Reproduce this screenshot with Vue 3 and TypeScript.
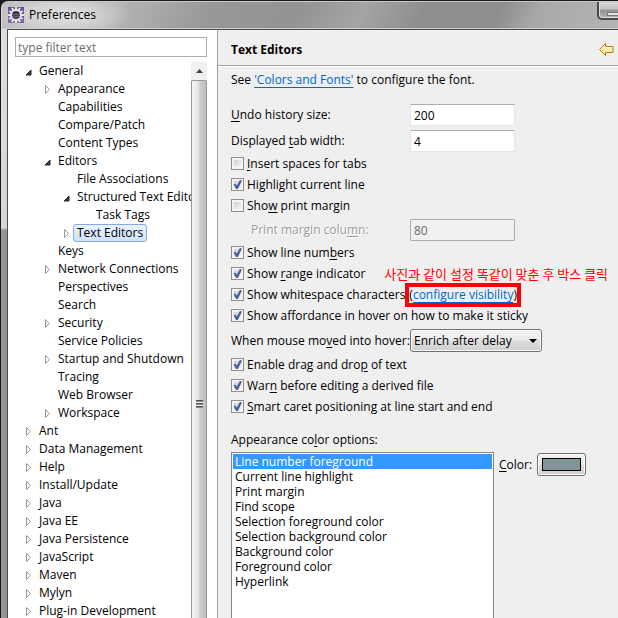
<script setup lang="ts">
import { reactive, ref } from 'vue'

interface TreeItem {
  label: string
  depth: number
  state?: 'open' | 'closed'
}

interface Label {
  pre: string
  key: string
  post: string
}

interface CheckOption extends Label {
  id: string
  checked: boolean
}

const tree: TreeItem[] = [
  { label: 'General', depth: 0, state: 'open' },
  { label: 'Appearance', depth: 1, state: 'closed' },
  { label: 'Capabilities', depth: 1 },
  { label: 'Compare/Patch', depth: 1 },
  { label: 'Content Types', depth: 1 },
  { label: 'Editors', depth: 1, state: 'open' },
  { label: 'File Associations', depth: 2 },
  { label: 'Structured Text Editors', depth: 2, state: 'open' },
  { label: 'Task Tags', depth: 3 },
  { label: 'Text Editors', depth: 2, state: 'closed' },
  { label: 'Keys', depth: 1 },
  { label: 'Network Connections', depth: 1, state: 'closed' },
  { label: 'Perspectives', depth: 1 },
  { label: 'Search', depth: 1 },
  { label: 'Security', depth: 1, state: 'closed' },
  { label: 'Service Policies', depth: 1 },
  { label: 'Startup and Shutdown', depth: 1, state: 'closed' },
  { label: 'Tracing', depth: 1 },
  { label: 'Web Browser', depth: 1 },
  { label: 'Workspace', depth: 1, state: 'closed' },
  { label: 'Ant', depth: 0, state: 'closed' },
  { label: 'Data Management', depth: 0, state: 'closed' },
  { label: 'Help', depth: 0, state: 'closed' },
  { label: 'Install/Update', depth: 0, state: 'closed' },
  { label: 'Java', depth: 0, state: 'closed' },
  { label: 'Java EE', depth: 0, state: 'closed' },
  { label: 'Java Persistence', depth: 0, state: 'closed' },
  { label: 'JavaScript', depth: 0, state: 'closed' },
  { label: 'Maven', depth: 0, state: 'closed' },
  { label: 'Mylyn', depth: 0, state: 'closed' },
  { label: 'Plug-in Development', depth: 0, state: 'closed' },
]

const selectedPage = ref('Text Editors')
const filter = ref('')
const undoSize = ref('200')
const tabWidth = ref('4')
const marginColumn = ref('80')

const marginOptions = reactive<CheckOption[]>([
  { id: 'spaces', pre: '', key: 'I', post: 'nsert spaces for tabs', checked: false },
  { id: 'current', pre: 'Hi', key: 'g', post: 'hlight current line', checked: true },
  { id: 'margin', pre: 'Sho', key: 'w', post: ' print margin', checked: false },
])

const viewOptions = reactive<CheckOption[]>([
  { id: 'lines', pre: 'Show line num', key: 'b', post: 'ers', checked: true },
  { id: 'range', pre: 'Show ', key: 'r', post: 'ange indicator', checked: true },
  { id: 'whitespace', pre: 'Show whitespace characters', key: '', post: '', checked: true },
  { id: 'sticky', pre: 'Show affordance in hover on how to make it sticky', key: '', post: '', checked: true },
])

const editOptions = reactive<CheckOption[]>([
  { id: 'drag', pre: 'Enable drag and dro', key: 'p', post: ' of text', checked: true },
  { id: 'derived', pre: 'War', key: 'n', post: ' before editing a derived file', checked: true },
  { id: 'caret', pre: '', key: 'S', post: 'mart caret positioning at line start and end', checked: true },
])

const colorOptions = [
  'Line number foreground',
  'Current line highlight',
  'Print margin',
  'Find scope',
  'Selection foreground color',
  'Selection background color',
  'Background color',
  'Foreground color',
  'Hyperlink',
]
const selectedColor = ref(colorOptions[0])

const teeth = Array.from({ length: 12 }, (_, i) => i * 30)
</script>

<template>
  <div class="window">
    <header class="titlebar">
      <svg class="app-icon" viewBox="0 0 16 16" aria-hidden="true">
        <rect width="16" height="16" fill="#65509a" />
        <path d="M0 16V9l16 4v3z" fill="#7c63ad" />
        <g fill="#e9e6ea">
          <rect v-for="a in teeth" :key="a" x="7" y="0" width="2" height="3" :transform="`rotate(${a} 8 8)`" />
        </g>
        <circle cx="8" cy="8" r="5" fill="#413b50" stroke="#e9e6ea" stroke-width="2" />
        <path d="M4 7.5h8M4 9.5h8" stroke="#6c6580" stroke-width="1" />
      </svg>
      <h1 class="title">Preferences</h1>
      <button class="minimize" type="button" aria-label="Minimize"><span class="dash"></span></button>
    </header>

    <div class="body">
      <nav class="sidebar">
        <input v-model="filter" class="filter" type="text" placeholder="type filter text" aria-label="type filter text" />
        <div class="tree-area">
          <ul class="tree" role="tree">
            <li
              v-for="item in tree"
              :key="item.label"
              class="node"
              :class="`depth-${item.depth}`"
              role="treeitem"
              :aria-selected="item.label === selectedPage"
              @click="selectedPage = item.label"
            >
              <svg class="twisty" viewBox="0 0 8 10" aria-hidden="true">
                <path v-if="item.state === 'open'" d="M6 4v5h-5z" fill="#404040" stroke="#262626" />
                <path v-else-if="item.state === 'closed'" d="M1.5 1.5v8l4-4z" fill="#fff" stroke="#989898" />
              </svg>
              <span class="node-label" :class="{ selected: item.label === selectedPage }">{{ item.label }}</span>
            </li>
          </ul>
          <div class="scrollbar" aria-hidden="true">
            <div class="scroll-up">
              <svg viewBox="0 0 7 4" class="up-arrow"><path d="M0 4L3.500 0L7 4z" fill="#404040" /></svg>
            </div>
            <div class="thumb"><span class="grip"></span></div>
          </div>
        </div>
      </nav>

      <main class="page">
        <div class="page-head">
          <h2>Text Editors</h2>
          <button class="back" type="button" aria-label="Back">
            <svg viewBox="0 0 15 13" aria-hidden="true">
              <path d="M.5 6.500L6.500.5v3h7.500v6H6.500v3z" fill="#fdeeae" stroke="#b87a0a" />
              <path d="M2.500 6.500L5.500 3.500v1h7.500" fill="none" stroke="#fffbe6" />
            </svg>
          </button>
        </div>

        <div class="content">
          <p class="intro">See <a href="#fonts">'Colors and Fonts'</a> to configure the font.</p>

          <div class="field">
            <label for="undo"><u>U</u>ndo history size:</label>
            <input id="undo" v-model="undoSize" type="text" />
          </div>
          <div class="field">
            <label for="tab">Displayed <u>t</u>ab width:</label>
            <input id="tab" v-model="tabWidth" type="text" />
          </div>

          <div v-for="o in marginOptions" :key="o.id" class="check">
            <input :id="o.id" v-model="o.checked" type="checkbox" />
            <label :for="o.id">{{ o.pre }}<u>{{ o.key }}</u>{{ o.post }}</label>
          </div>

          <div class="field disabled">
            <label for="column">Print margin colu<u>m</u>n:</label>
            <input id="column" v-model="marginColumn" type="text" disabled />
          </div>

          <div v-for="o in viewOptions" :key="o.id" class="check">
            <input :id="o.id" v-model="o.checked" type="checkbox" />
            <label :for="o.id">{{ o.pre }}<u>{{ o.key }}</u>{{ o.post }}</label>
            <span v-if="o.id === 'whitespace'" class="configure">
              (<a href="#visibility">configure visibility</a>)
              <span class="note">사진과 같이 설정 똑같이 맞춘 후 박스 클릭</span>
            </span>
          </div>

          <div class="hover-row">
            <label for="hover">When mouse mo<u>v</u>ed into hover:</label>
            <span class="combo">
              <select id="hover">
                <option>Enrich after delay</option>
              </select>
              <svg class="combo-arrow" viewBox="0 0 8 4" aria-hidden="true"><path d="M0 0h8L4 4z" fill="#000" /></svg>
            </span>
          </div>

          <div v-for="o in editOptions" :key="o.id" class="check">
            <input :id="o.id" v-model="o.checked" type="checkbox" />
            <label :for="o.id">{{ o.pre }}<u>{{ o.key }}</u>{{ o.post }}</label>
          </div>

          <p id="colors-label" class="colors-label">Appearance co<u>l</u>or options:</p>
          <div class="colors">
            <ul class="color-list" role="listbox" aria-labelledby="colors-label">
              <li
                v-for="c in colorOptions"
                :key="c"
                role="option"
                :aria-selected="c === selectedColor"
                :class="{ active: c === selectedColor }"
                @click="selectedColor = c"
              >
                {{ c }}
              </li>
            </ul>
            <div class="color-pick">
              <label for="color"><u>C</u>olor:</label>
              <button id="color" class="swatch-button" type="button"><span class="swatch"></span></button>
            </div>
          </div>
        </div>
      </main>
    </div>
  </div>
</template>

<style>
body {
  background: #1c171d;
}
</style>

<style scoped>
.window {
  box-sizing: border-box;
  height: 100vh;
  margin-left: 1px;
  padding-top: 1px;
  display: flex;
  flex-direction: column;
  overflow: hidden;
  font-family: "Open Sans", "Noto Sans CJK KR", sans-serif;
  font-size: 12px;
  line-height: 18px;
  color: #000;
  background: #1c171d;
}
h1, h2, p, ul {
  margin: 0;
  padding: 0;
}
ul {
  list-style: none;
}
input, select, button {
  box-sizing: border-box;
  margin: 0;
  font: inherit;
  color: inherit;
}
u {
  text-underline-offset: 2px;
}

.titlebar {
  flex: none;
  box-sizing: border-box;
  height: 28px;
  padding-left: 6px;
  display: flex;
  align-items: center;
  gap: 5px;
  border-top: 1px solid #c9c9c9;
  border-left: 1px solid #dedede;
  border-bottom: 1px solid #cfcfcf;
  border-radius: 7px 0 0 0;
  background:
    radial-gradient(ellipse 70px 24px at 58px 13px, #e2e2e2 0%, #d6d6d6cc 55%, #c0c0c000 100%),
    linear-gradient(115deg, #b8b8b8 0%, #b6b6b6 18%, #989898 34%, #939393 48%, #a4a4a4 58%, #8e8e8e 68%, #8e8e8e 80%, #a8a8a8 86%, #b4b4b4 100%);
}
.app-icon {
  width: 16px;
  height: 16px;
}
.title {
  font-size: 12px;
  font-weight: 400;
}
.minimize {
  align-self: flex-start;
  margin-left: auto;
  width: 21px;
  height: 18px;
  padding: 7px 0 0 8px;
  border: 2px solid #4a4a4a;
  border-width: 0 0 2px 2px;
  border-radius: 0 0 0 5px;
  background: linear-gradient(#d8d8d8 0, #c2c2c2 45%, #929292 50%, #b2b2b2 100%);
  box-shadow: inset 1px -1px 0 #dcdcdc;
}
.dash {
  display: block;
  box-sizing: border-box;
  height: 4px;
  border: 1px solid #777;
  border-right: 0;
  background: #e4e4e4;
}

.body {
  flex: 1;
  min-height: 0;
  display: flex;
  border-left: 6px solid #989393;
  border-image: linear-gradient(#e0dede 0, #d8d5d5 199px, #989393 201px, #989393 100%) 0 0 0 6;
}
.sidebar {
  flex: none;
  box-sizing: border-box;
  width: 211px;
  padding: 7px 10px 0 7px;
  display: flex;
  flex-direction: column;
  gap: 5px;
  border: 1px solid #4c4c4c;
  border-right-color: #a0a0a0;
  border-bottom: 0;
  background: #fff;
}
.filter {
  flex: none;
  width: 100%;
  height: 20px;
  padding: 0 2px;
  border: 1px solid #abadb3;
  border-radius: 0;
  background: #fff;
}
.filter::placeholder {
  color: #6d6d6d;
  opacity: 1;
}
.tree-area {
  flex: 1;
  min-height: 0;
  display: flex;
}
.tree {
  flex: 1;
  min-width: 0;
  overflow: hidden;
}
.node {
  height: 18px;
  display: flex;
  align-items: center;
  gap: 4px;
  white-space: nowrap;
}
.depth-0 { padding-left: 10px; }
.depth-1 { padding-left: 29px; }
.depth-2 { padding-left: 48px; }
.depth-3 { padding-left: 67px; }
.twisty {
  flex: none;
  width: 8px;
  height: 10px;
}
.node-label {
  box-sizing: border-box;
  height: 18px;
  margin-left: -2px;
  padding: 0 3px;
  line-height: 16px;
  border: 1px solid transparent;
  border-radius: 3px;
}
.node-label.selected {
  border-color: #84acdd;
  background: linear-gradient(#eaf3ff, #cfe2fc);
}
.scrollbar {
  flex: none;
  width: 16px;
  display: flex;
  flex-direction: column;
  background: #f0f0f0;
}
.scroll-up {
  height: 18px;
  display: flex;
  align-items: center;
  justify-content: center;
}
.up-arrow {
  width: 7px;
  height: 4px;
}
.thumb {
  flex: 1;
  display: flex;
  justify-content: center;
  padding-top: 319px;
  border: 1px solid #979797;
  border-bottom: 0;
  border-radius: 2px 2px 0 0;
  background: linear-gradient(90deg, #f5f5f5 0%, #e6e6e8 45%, #cfcfd2 55%, #bdbdc2 100%);
}
.grip {
  width: 7px;
  height: 8px;
  background: repeating-linear-gradient(#4f4f4f 0 1px, #8a8a8a 1px 2px, #f0f0f0 2px 3px);
}

.page {
  flex: 1;
  min-width: 0;
  display: flex;
  flex-direction: column;
  border-top: 1px solid #4c4c4c;
  background: #efefef;
}
.page-head {
  flex: none;
  box-sizing: border-box;
  height: 37px;
  padding: 3px 4px 0 13px;
  display: flex;
  align-items: center;
  justify-content: space-between;
  border-bottom: 1px solid #fff;
  box-shadow: inset 0 -1px 0 #a0a0a0;
}
.page-head h2 {
  font-size: 12px;
  font-weight: 700;
}
.back {
  width: 15px;
  height: 13px;
  padding: 0;
  border: 0;
  background: none;
}
.back svg {
  display: block;
  width: 15px;
  height: 13px;
}
.content {
  flex: 1;
  min-height: 0;
  padding: 4px 18px 0 13px;
  display: flex;
  flex-direction: column;
}
.intro {
  padding-bottom: 12px;
}
a {
  color: #0066cc;
  text-underline-offset: 3px;
}
.field {
  flex: none;
  box-sizing: border-box;
  height: 26px;
  padding-top: 2px;
  display: flex;
  align-items: center;
}
.field label {
  width: 179px;
}
.field input {
  width: 105px;
  height: 22px;
  padding: 0 3px;
  border: 1px solid #e1e6ee;
  border-top-color: #abadb3;
  border-radius: 1px;
  background: #fff;
}
.field.disabled {
  color: #9c9c9c;
  text-shadow: 1px 1px 0 #fff;
}
.field.disabled label {
  box-sizing: border-box;
  padding-left: 20px;
}
.field.disabled input {
  border-color: #adadad;
  color: #6d6d6d;
  background: #f0f0f0;
}
.check {
  flex: none;
  height: 21px;
  display: flex;
  align-items: center;
  gap: 3px;
  white-space: nowrap;
}
.check input {
  appearance: none;
  width: 13px;
  height: 13px;
  border: 1px solid #8e8f8f;
  background:
    linear-gradient(135deg, #cbcfd5, #f6f6f6) 2px 2px / 7px 7px no-repeat,
    #f4f4f4;
}
.check input:checked {
  display: grid;
}
.check input:checked::after {
  content: "";
  width: 9px;
  height: 9px;
  margin: 1px;
  background: #4a5f9c;
  clip-path: polygon(6% 48%, 24% 40%, 42% 62%, 76% 0, 100% 6%, 54% 100%, 34% 100%);
}
.configure {
  position: relative;
  flex: none;
  height: 24px;
  box-sizing: border-box;
  margin-left: -3px;
  line-height: 15px;
  border: 4px solid #fb0007;
}
.note {
  position: absolute;
  left: -25px;
  bottom: 20px;
  color: #f00;
  font-family: "Noto Sans CJK KR", sans-serif;
  font-size: 13px;
  line-height: 18px;
}
.hover-row {
  flex: none;
  box-sizing: border-box;
  height: 28px;
  padding-top: 1px;
  display: flex;
  align-items: center;
}
.hover-row label {
  width: 179px;
  white-space: nowrap;
}
.combo {
  position: relative;
}
.combo select {
  appearance: none;
  display: block;
  width: 132px;
  height: 23px;
  padding: 0 20px 0 3px;
  line-height: 18px;
  border: 1px solid #707070;
  border-radius: 3px;
  background: linear-gradient(#f2f2f2 0, #ebebeb 48%, #dddddd 52%, #cfcfcf 100%);
  box-shadow: inset 0 0 0 1px #fafafa;
}
.combo-arrow {
  position: absolute;
  right: 5px;
  top: 10px;
  width: 8px;
  height: 4px;
  pointer-events: none;
}
.colors-label {
  padding: 14px 0 3px;
}
.colors {
  flex: 1;
  min-height: 0;
  display: flex;
  align-items: stretch;
  gap: 5px;
}
.color-list {
  flex: 0 1 263px;
  box-sizing: border-box;
  padding: 1px;
  border: 1px solid #828790;
  border-bottom: 0;
  background: #fff;
}
.color-list li {
  height: 15px;
  padding-left: 2px;
  line-height: 15px;
}
.color-list li.active {
  color: #fff;
  background: #3399ff;
}
.color-pick {
  display: flex;
  align-items: center;
  align-self: flex-start;
  gap: 5px;
  padding-top: 1px;
}
.swatch-button {
  width: 49px;
  height: 23px;
  padding: 0 4px;
  border: 1px solid #707070;
  border-radius: 3px;
  background: linear-gradient(#f2f2f2 0, #ebebeb 48%, #dddddd 52%, #cfcfcf 100%);
  box-shadow: inset 0 0 0 1px #fafafa;
}
.swatch {
  display: block;
  box-sizing: border-box;
  height: 13px;
  border: 1px solid #000;
  background: #819599;
}
</style>
